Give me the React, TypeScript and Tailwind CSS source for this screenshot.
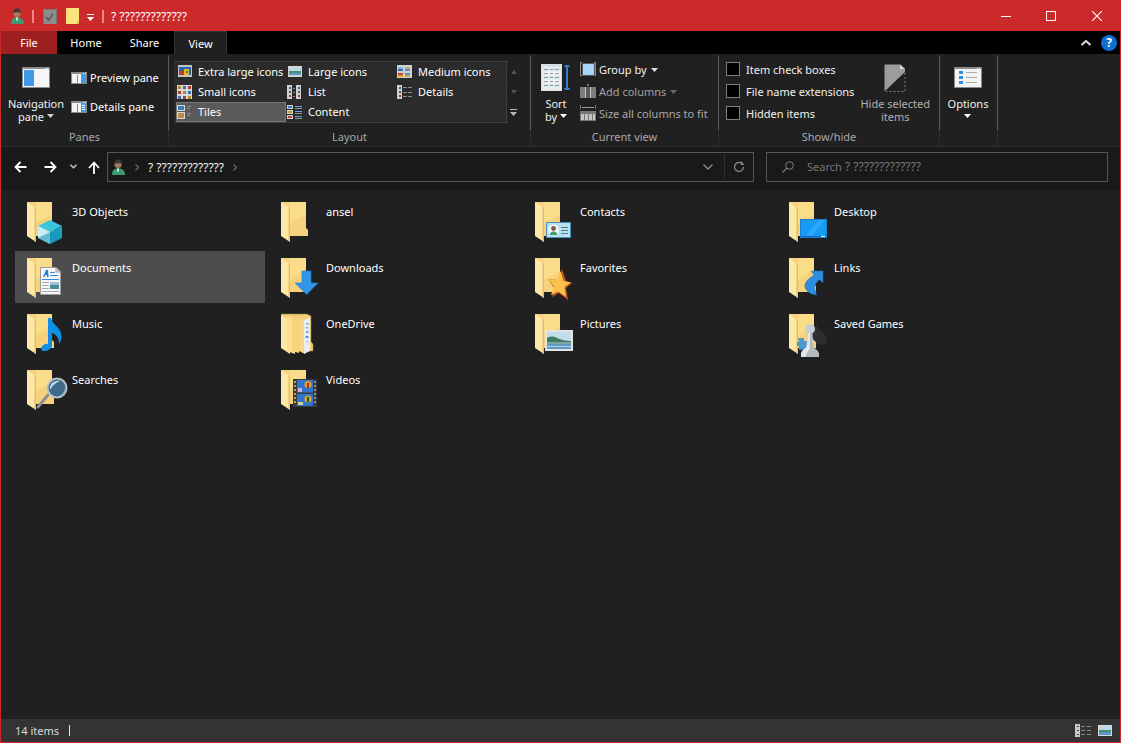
import React from "react";

const Svg = ({ w, h, className = "", children, crisp = false }: { w: number; h: number; className?: string; children: React.ReactNode; crisp?: boolean }) => (
  <svg width={w} height={h} viewBox={`0 0 ${w} ${h}`} className={`block shrink-0 ${className}`} shapeRendering={crisp ? "crispEdges" : undefined}>
    {children}
  </svg>
);

const UserIcon = () => (
  <Svg w={15} h={17}>
    <path d="M1 16 C1 11 3 10 7 9 C11 10 14 11 14 16 Z" fill="#3f9a72" />
    <path d="M6 9.5 L8 9.5 L7.5 13 L6.5 13 Z" fill="#e8f0e8" />
    <circle cx="7" cy="5.5" r="3.6" fill="#a9785a" />
    <path d="M3.2 5 C3 1.5 5.5 0.5 7.5 0.5 C10 0.5 11 3 10.8 5.5 C9.5 3.8 6 3.8 3.2 5 Z" fill="#3a3a38" />
  </Svg>
);

const Folder = () => (
  <g>
    <path d="M4 7 H29 V33 L31 35 V41 H13 Z" fill="#f5d27b" />
    <path d="M13 7 H29 V20 L13 28 Z" fill="#fbdf8d" opacity="0.8" />
    <path d="M4 7 L13 13 V47 L4 41 Z" fill="#fde8a7" />
    <path d="M13 13 V47 L11.5 46 V12 Z" fill="#e6bf62" />
  </g>
);

const Overlays: Record<string, React.ReactNode> = {
  cube: (
    <g>
      <path d="M27 25 L39 31 L27 37 L15 31 Z" fill="#3cc6de" />
      <path d="M15 31 L27 37 V49 L15 43 Z" fill="#c5eff5" />
      <path d="M39 31 L27 37 V49 L39 43 Z" fill="#1b9ec4" />
      <path d="M15 43 L27 37 L39 43 L27 49 Z" fill="#178fb4" opacity="0.55" />
    </g>
  ),
  none: null,
  doc: (
    <g>
      <path d="M17.5 16.5 H33 L37.5 21 V43.5 H17.5 Z" fill="#f6f6f6" stroke="#9c9c9c" />
      <path d="M33 16.5 V21 H37.5 Z" fill="#d8d8d8" stroke="#9c9c9c" />
      <path d="M20 26 L23 19 L25 19 L25.6 26 H24 L23.8 24 H22.4 L21.4 26 Z" fill="#2a80d0" />
      <rect x="27" y="21" width="5" height="1" fill="#3b8cd6" />
      <rect x="27" y="24" width="8" height="1" fill="#3b8cd6" />
      <rect x="19" y="28" width="17" height="1" fill="#3b8cd6" />
      <rect x="19" y="31" width="7" height="1" fill="#aaa" />
      <rect x="19" y="34" width="7" height="1" fill="#aaa" />
      <rect x="19" y="37" width="7" height="1" fill="#aaa" />
      <rect x="19" y="40" width="17" height="1" fill="#aaa" />
      <rect x="27" y="31" width="9" height="7" fill="#4d8a98" />
      <rect x="27" y="31" width="9" height="3" fill="#9fc4d8" />
    </g>
  ),
  download: (
    <g>
      <path d="M25 20 H34 V32 H41 L29.7 43.5 L18 32 H25 Z" fill="#3196ea" stroke="#1f7ac8" strokeWidth="0.6" />
    </g>
  ),
  contact: (
    <g>
      <rect x="15.5" y="27.5" width="24" height="15" fill="#bcdff0" stroke="#4a90bc" />
      <circle cx="22.5" cy="35" r="5.5" fill="#f4f8f8" />
      <path d="M19 40 C19 37 21 36.5 22.5 36.5 C24 36.5 26 37 26 40 Z" fill="#3f9a72" />
      <circle cx="22.5" cy="33.5" r="2.4" fill="#7e5a44" />
      <rect x="30" y="32" width="7" height="1" fill="#4a7ea0" />
      <rect x="30" y="35" width="7" height="1" fill="#4a7ea0" />
      <rect x="30" y="38" width="7" height="1" fill="#4a7ea0" />
    </g>
  ),
  desktop: (
    <g>
      <rect x="15" y="24" width="27" height="19" fill="#1c7fd2" />
      <rect x="16" y="25" width="25" height="17" fill="#169cf5" />
      <path d="M20 42 L34 25 H40 L26 42 Z" fill="#2ba6f8" />
      <rect x="16" y="41" width="25" height="1" fill="#0b68b5" />
      <rect x="36" y="41" width="4" height="1" fill="#e8f4ff" />
    </g>
  ),
  star: (
    <g>
      <path d="M31 18 L35 30 L41 32 L35 37 L37 49 L28 42 L21 46 L23 37 L17 28 L27 29 Z" fill="#c8561c" />
      <path d="M29.5 20 L32.5 30 L40 31.5 L33.5 36 L35 46 L27 40.5 L20 44 L23 35.5 L17 28 L26.5 29 Z" fill="#fac04a" />
    </g>
  ),
  link: (
    <g>
      <path d="M29 20 H38 V32 L34.5 28.5 C31 31 29 35 30 39 C30.5 42 32 44 32 44 C26 44 21 40 20 36 C19.5 31 24 27 29.5 24 L26 20.5 Z" fill="#2f8ee0" stroke="#1e6eb8" strokeWidth="0.6" />
    </g>
  ),
  music: (
    <g>
      <path d="M25 11 H28 C29 16 33 18 36 22 C39.5 27 39 33 36 37 C36.5 32 34 28 29 26 V38 C29 42 24.5 44 21 44 C18 44 17.5 41.5 19 39.5 C20.5 37.5 23 36.5 25 37 Z" fill="#0f8fe6" />
    </g>
  ),
  onedrive: (
    <g>
      <path d="M4 7 H30 L34 9 V35 L36 37 V44 H14 Z" fill="#f1cd74" stroke="#9a8550" strokeWidth="0.5" />
      <path d="M4 8 L13 13 V47 L4 41 Z" fill="#fde7a5" />
      <path d="M10 9 L18 12 V47 L10 44 Z" fill="#fbe093" />
      <path d="M15 10 L22 13 V46 L15 44 Z" fill="#f6d27c" />
      <path d="M22 10 L28 13 V47 L22 44 Z" fill="#f7d784" />
      <path d="M27 13 L33 10 V44 L27 47 Z" fill="#e8eef2" />
      <rect x="29" y="16" width="3" height="1.4" fill="#7db4d8" />
      <rect x="28.5" y="20" width="3" height="1.4" fill="#8dc0de" />
      <rect x="29" y="24" width="2.5" height="2" fill="#6aa8d4" />
      <rect x="28.5" y="29" width="3" height="2" fill="#4f98c8" />
      <rect x="29" y="34" width="2.5" height="1.5" fill="#bfc8cc" />
    </g>
  ),
  picture: (
    <g>
      <rect x="14" y="23" width="28" height="21" fill="#e4e4e4" />
      <rect x="16" y="25" width="24" height="17" fill="#c4dcea" />
      <path d="M16 31 C19 29 23 29 26 31 C30 33 35 34 40 34 V37 H16 Z" fill="#3f7c62" />
      <path d="M16 35 H40 V37 H16 Z" fill="#7fa8a0" />
      <rect x="16" y="37" width="24" height="5" fill="#5f9cc4" />
      <rect x="16" y="39" width="24" height="1" fill="#b6d4e4" />
    </g>
  ),
  game: (
    <g>
      <path d="M13 31 H19 V34 H23 V43 H14 V39 H12 V35 H14 Z" fill="#3893d8" opacity="0.9" />
      <path d="M31 18 C35 24 43 28 42 33 C41 38 36 38 33 37 L24 28 Z" fill="#2e2e2e" />
      <circle cx="25" cy="22" r="5" fill="#c9ced2" />
      <path d="M22.5 26 H27.5 L28.5 40 C30.5 42 34 44 34 47 V50 H16 V47 C16 44 19.5 42 21.5 40 Z" fill="#b4babf" />
      <path d="M23 26 H25 L24.8 42 C23 44 21 46 20.5 50 H16 V47 C16 44 19.5 42 21.5 40 Z" fill="#e4e7ea" />
    </g>
  ),
  search: (
    <g>
      <path d="M15 44 L25 32" stroke="#8f8f8f" strokeWidth="3" strokeLinecap="round" />
      <circle cx="34" cy="25" r="9.5" fill="#3c6a88" stroke="#b7c2c8" strokeWidth="2" />
      <path d="M27 27 C26 21 31 17 37 18 C32 20 29 23 27 27 Z" fill="#c4d8e4" />
      <path d="M36 33 C40 31 42 28 42 24 C44 30 40 34 36 33 Z" fill="#8cb0c4" />
    </g>
  ),
  video: (
    <g>
      <rect x="16" y="16" width="24" height="28" fill="#3a3a3a" />
      <rect x="20" y="17" width="16" height="12.5" fill="#2f74cf" />
      <rect x="20" y="31" width="16" height="12" fill="#2f74cf" />
      <path d="M21 25 H25 V29 H21 Z" fill="#d8a8d0" />
      <circle cx="31" cy="21.5" r="3.6" fill="#e2a020" />
      <path d="M30 20 H32 V25 H30 Z" fill="#b02a1c" />
      <circle cx="31" cy="36" r="3.6" fill="#e2a020" />
      <path d="M30 34 H32 V39 H30 Z" fill="#1c5a30" />
      <rect x="21" y="39" width="5" height="3" fill="#c8d890" />
      {[18, 22, 26, 30, 34, 38].map((y) => (
        <g key={y}>
          <rect x="17" y={y} width="2" height="2" fill="#a8a070" />
          <rect x="37" y={y} width="2" height="2" fill="#8a8a8a" />
        </g>
      ))}
    </g>
  ),
};

const items: [string, string][] = [
  ["3D Objects", "cube"],
  ["ansel", "none"],
  ["Contacts", "contact"],
  ["Desktop", "desktop"],
  ["Documents", "doc"],
  ["Downloads", "download"],
  ["Favorites", "star"],
  ["Links", "link"],
  ["Music", "music"],
  ["OneDrive", "onedrive"],
  ["Pictures", "picture"],
  ["Saved Games", "game"],
  ["Searches", "search"],
  ["Videos", "video"],
];

const Tile = ({ name, kind }: { name: string; kind: string }) => (
  <div className={`flex h-[52px] w-[250px] pl-[8px] ${name === "Documents" ? "bg-[#4d4d4d]" : ""}`}>
    <Svg w={48} h={52}>
      {kind !== "onedrive" && <Folder />}
      {Overlays[kind]}
    </Svg>
    <span className="ml-[1px] mt-[9px] h-[16px] leading-[16px] text-white">{name}</span>
  </div>
);

/* ribbon icons */
const Pane = ({ kind }: { kind: "preview" | "details" }) => (
  <Svg w={16} h={12} crisp>
    <rect x="0" y="0" width="16" height="12" fill="#8a8a8a" />
    <rect x="1" y="2" width="14" height="9" fill="#f4f4f4" />
    <rect x="6" y="3" width="1" height="8" fill="#8a8a8a" />
    <rect x="10" y="2" width="5" height="9" fill="#3f9be8" />
    {kind === "details" && (
      <>
        <rect x="11" y="4" width="3" height="1" fill="#fff" />
        <rect x="11" y="6" width="3" height="1" fill="#fff" />
        <rect x="11" y="8" width="3" height="1" fill="#fff" />
      </>
    )}
    <rect x="12" y="1" width="1" height="1" fill="#eee" />
    <rect x="14" y="1" width="1" height="1" fill="#eee" />
  </Svg>
);

const Caret = ({ color = "#fff" }: { color?: string }) => (
  <svg width="7" height="4" viewBox="0 0 7 4" className="inline-block">
    <path d="M0 0 H7 L3.5 4 Z" fill={color} />
  </svg>
);

const Thumb = ({ x, y, a, b }: { x: number; y: number; a: string; b: string }) => (
  <>
    <rect x={x} y={y} width="5" height="4" fill={a} />
    <rect x={x} y={y + 2} width="5" height="2" fill={b} />
  </>
);

const GalleryIcon = ({ kind }: { kind: string }) => {
  const dash = (x: number, y: number, w: number, c = "#8c8c8c") => <rect key={`${x}-${y}`} x={x} y={y} width={w} height="1" fill={c} />;
  return (
    <Svg w={16} h={14} crisp>
      {kind === "xl" && (
        <>
          <rect x="1" y="0" width="14" height="12" fill="#c4c4c4" />
          <rect x="2" y="2" width="12" height="8" fill="#2a62b8" />
          <rect x="2" y="6" width="5" height="4" fill="#c8342a" />
          <rect x="7" y="4" width="5" height="6" fill="#e2b820" />
          <rect x="9" y="6" width="2" height="2" fill="#3a8a3a" />
        </>
      )}
      {kind === "l" && (
        <>
          <rect x="1" y="1" width="14" height="11" fill="#d4d4d4" />
          <rect x="2" y="3" width="12" height="7" fill="#b8d8e8" />
          <rect x="2" y="6" width="12" height="2" fill="#4a8a70" />
          <rect x="2" y="8" width="12" height="2" fill="#5a98c8" />
        </>
      )}
      {kind === "m" && (
        <>
          <rect x="0" y="0" width="15" height="13" fill="#d0d0d0" />
          <Thumb x={1} y={2} a="#8cb4dc" b="#3a6ab0" />
          <Thumb x={8} y={2} a="#c0b070" b="#5a8ac0" />
          <Thumb x={1} y={8} a="#d04030" b="#e0a030" />
          <Thumb x={8} y={8} a="#5090c0" b="#d0b030" />
        </>
      )}
      {kind === "s" && (
        <>
          <rect x="0" y="0" width="15" height="14" fill="#d8d8d8" />
          {[1, 6, 11].flatMap((x) =>
            [1, 6, 11].map((y, i) => <rect key={`${x}-${y}`} x={x} y={y} width="3" height="3" fill={["#3a70b0", "#b08a30", "#b03a30"][(x + i) % 3]} />)
          )}
        </>
      )}
      {kind === "list" && (
        <>
          {[0, 9].map((x) => (
            <g key={x}>
              <rect x={x} y="0" width="5" height="14" fill="#cfcfcf" />
              <rect x={x + 2} y="2" width="2" height="2" fill="#3a70b0" />
              <rect x={x + 2} y="6" width="2" height="2" fill="#555" />
              <rect x={x + 2} y="10" width="2" height="2" fill="#b03a30" />
            </g>
          ))}
          {[3, 7, 11].map((y) => dash(6, y, 2))}
        </>
      )}
      {kind === "details" && (
        <>
          <rect x="0" y="0" width="5" height="14" fill="#cfcfcf" />
          <rect x="2" y="2" width="2" height="2" fill="#3a70b0" />
          <rect x="2" y="6" width="2" height="2" fill="#555" />
          <rect x="2" y="10" width="2" height="2" fill="#b03a30" />
          {[2, 7, 11].map((y) => (
            <g key={y}>
              {dash(6, y, 4)}
              {dash(11, y, 4)}
            </g>
          ))}
        </>
      )}
      {kind === "tiles" && (
        <>
          <rect x="0" y="0" width="8" height="6" fill="#d8d8d8" />
          <rect x="1" y="1" width="6" height="4" fill="#3a78c0" />
          <rect x="0" y="7" width="8" height="7" fill="#d8d8d8" />
          <rect x="1" y="8" width="6" height="5" fill="#c08a40" />
          {dash(10, 1, 4)}
          {dash(10, 3, 3)}
          {dash(10, 8, 4)}
          {dash(10, 10, 3)}
        </>
      )}
      {kind === "content" && (
        <>
          <rect x="0" y="0" width="6" height="4" fill="#d0d0d0" />
          <rect x="1" y="1" width="4" height="2" fill="#3a78c0" />
          <rect x="0" y="5" width="6" height="4" fill="#d0d0d0" />
          <rect x="1" y="6" width="4" height="2" fill="#c0a030" />
          <rect x="0" y="10" width="6" height="4" fill="#d0d0d0" />
          <rect x="1" y="11" width="4" height="2" fill="#c04030" />
          {[1, 6, 11].map((y) => dash(8, y, 7, "#6aa4e8"))}
          {[3, 8, 13].map((y) => dash(8, y, 7, "#9a9a9a"))}
        </>
      )}
    </Svg>
  );
};

const GCell = ({ icon, label, active = false, w }: { icon: string; label: string; active?: boolean; w: string }) => (
  <div className={`flex h-[20px] items-center ${w} ${active ? "border border-[#787878] bg-[#5a5a5a]" : ""}`}>
    <GalleryIcon kind={icon} />
    <span className="mb-[2px] ml-[5px] whitespace-nowrap text-white">{label}</span>
  </div>
);

const Group = ({ w, label, children }: { w: string; label: string; children: React.ReactNode }) => (
  <div className={`flex h-full shrink-0 flex-col border-r border-[#2d2d2d] pt-[2px] ${w}`}>
    <div className="-mr-[1px] h-[74px] border-r border-[#5c5c5c]">{children}</div>
    <div className="h-[14px] text-center leading-[14px] text-[#a8a8a8]">{label}</div>
  </div>
);

const Check = ({ label }: { label: string }) => (
  <div className="flex h-[22px] items-center">
    <span className="h-[14px] w-[14px] border border-[#808080] bg-black" />
    <span className="ml-[6px] whitespace-nowrap text-[#f0f0f0]">{label}</span>
  </div>
);

export default function App() {
  return (
    <div className="flex h-[743px] w-[1121px] flex-col overflow-hidden border border-[#c92a2a] bg-[#202020] font-['Noto_Sans',sans-serif] text-[11px] leading-[13px] text-white">
      {/* title bar */}
      <div className="flex h-[30px] shrink-0 items-center bg-[#cc2a2a]">
        <div className="ml-[9px]"><UserIcon /></div>
        <span className="ml-[7px] h-[13px] w-[2px] bg-[#e88a8a]" />
        <Svg w={14} h={15} className="ml-[9px]" crisp>
          <rect x="0" y="0" width="13" height="15" fill="#8c8c8c" stroke="#777" />
          <path d="M3 8 L5.5 11 L10 5" stroke="#555" strokeWidth="1.4" fill="none" shapeRendering="auto" />
        </Svg>
        <Svg w={13} h={16} className="ml-[9px]" crisp>
          <rect x="0" y="0" width="13" height="16" fill="#fde27e" />
          <rect x="11" y="13" width="2" height="3" fill="#e8b83c" />
        </Svg>
        <Svg w={8} h={8} className="ml-[8px] mt-[3px]" crisp>
          <rect x="0" y="0" width="7" height="1" fill="#fff" />
          <path d="M0 3 H7 L3.5 7 Z" fill="#fff" shapeRendering="auto" />
        </Svg>
        <span className="ml-[7px] h-[13px] w-[2px] bg-[#e88a8a]" />
        <span className="ml-[7px] text-[12px] text-white">? ?????????????</span>
        <div className="ml-auto mr-[18px] flex items-center">
          <Svg w={10} h={10} crisp><rect x="0" y="5" width="10" height="1" fill="#fff" /></Svg>
          <Svg w={10} h={10} className="ml-[35px]" crisp><rect x="0.5" y="0.5" width="9" height="9" fill="none" stroke="#fff" /></Svg>
          <Svg w={10} h={10} className="ml-[36px]"><path d="M0 0 L10 10 M10 0 L0 10" stroke="#fff" strokeWidth="1.1" /></Svg>
        </div>
      </div>

      {/* tabs */}
      <div className="flex h-[23px] shrink-0 items-center bg-black">
        <div className="flex h-full w-[56px] items-center justify-center bg-[#9e1f1f]">File</div>
        <div className="flex h-full w-[58px] items-center justify-center">Home</div>
        <div className="flex h-full w-[59px] items-center justify-center">Share</div>
        <div className="flex h-full w-[53px] items-center justify-center border-x border-t border-[#333] bg-[#202020]">View</div>
        <div className="ml-auto mr-[3px] flex items-center gap-[10px]">
          <Svg w={10} h={6}><path d="M0.5 5 L5 1 L9.5 5" stroke="#d8d8d8" strokeWidth="2" fill="none" /></Svg>
          <div className="flex h-[16px] w-[16px] items-center justify-center rounded-full bg-[#0f6fd0] text-[12px] font-bold leading-none">?</div>
        </div>
      </div>

      {/* ribbon */}
      <div className="flex h-[93px] shrink-0 border-b border-[#2d2d2d] bg-[#202020]">
        <Group w="w-[168px]" label="Panes">
          <div className="flex">
            <div className="flex w-[70px] flex-col items-center pt-[11px]">
              <Svg w={28} h={21} crisp>
                <rect x="0" y="0" width="28" height="21" fill="#8a8a8a" />
                <rect x="1" y="2" width="26" height="18" fill="#f6f6f6" />
                <rect x="2" y="3" width="10" height="16" fill="#3f9be8" />
                <rect x="23" y="1" width="1" height="1" fill="#eee" />
                <rect x="25" y="1" width="1" height="1" fill="#eee" />
              </Svg>
              <div className="mt-[9px] text-center text-[#f0f0f0]">Navigation<br />pane <span className="relative top-[-2px]"><Caret color="#d0d0d0" /></span></div>
            </div>
            <div className="pt-[7px]">
              <div className="flex h-[29px] items-center"><Pane kind="preview" /><span className="ml-[3px]">Preview pane</span></div>
              <div className="flex h-[29px] items-center"><Pane kind="details" /><span className="ml-[3px]">Details pane</span></div>
            </div>
          </div>
        </Group>

        <Group w="w-[362px]" label="Layout">
          <div className="flex pl-[5px] pt-[5px]">
            <div className="h-[62px] w-[333px] border-y border-r border-[#3e3e3e] bg-[#2b2b2b] pl-[2px]">
              <div className="flex">
                <GCell icon="xl" label="Extra large icons" w="w-[110px] pl-[1px]" />
                <GCell icon="l" label="Large icons" w="w-[109px] pl-[1px]" />
                <GCell icon="m" label="Medium icons" w="w-[110px] pl-[2px]" />
              </div>
              <div className="flex">
                <GCell icon="s" label="Small icons" w="w-[110px] pl-[1px]" />
                <GCell icon="list" label="List" w="w-[109px] pl-[1px]" />
                <GCell icon="details" label="Details" w="w-[110px] pl-[2px]" />
              </div>
              <div className="flex">
                <GCell icon="tiles" label="Tiles" active w="w-[110px]" />
                <GCell icon="content" label="Content" w="w-[109px] pl-[1px]" />
              </div>
            </div>
            <div className="flex w-[13px] flex-col pt-[1px]">
              <div className="flex h-[20px] items-center justify-center"><Svg w={6} h={4}><path d="M0 4 L3 0 L6 4 Z" fill="#555" /></Svg></div>
              <div className="flex h-[20px] items-center justify-center"><Svg w={6} h={4}><path d="M0 0 L3 4 L6 0 Z" fill="#555" /></Svg></div>
              <div className="flex h-[20px] items-center justify-center">
                <Svg w={7} h={7} crisp><rect x="0" y="0" width="7" height="1" fill="#b8b8b8" /><path d="M0 3 H7 L3.5 7 Z" fill="#b8b8b8" shapeRendering="auto" /></Svg>
              </div>
            </div>
          </div>
        </Group>

        <Group w="w-[188px]" label="Current view">
          <div className="flex">
            <div className="flex w-[49px] flex-col items-center pl-[1px] pt-[8px]">
              <Svg w={30} h={27} crisp>
                <rect x="0" y="0" width="21" height="27" fill="#dcdcdc" />
                <rect x="1" y="1" width="19" height="25" fill="#e6eef2" />
                <rect x="1" y="1" width="19" height="2" fill="#cfe2ec" />
                {[5, 9, 13, 17, 21].map((y) => (
                  <g key={y}>
                    <rect x="2" y={y - 1} width="17" height="3" fill={y % 8 === 5 ? "#d5e6ef" : "#eef3f5"} />
                    <rect x="3" y={y} width="4" height="1" fill="#999" />
                    <rect x="9" y={y} width="3" height="1" fill="#999" />
                    <rect x="14" y={y} width="4" height="1" fill="#999" />
                  </g>
                ))}
                <rect x="25" y="2" width="2" height="23" fill="#2e82cc" />
                <rect x="23" y="2" width="6" height="1" fill="#2e82cc" />
                <rect x="24" y="1" width="4" height="1" fill="#2e82cc" />
                <rect x="23" y="24" width="6" height="1" fill="#2e82cc" />
                <rect x="24" y="25" width="4" height="1" fill="#2e82cc" />
              </Svg>
              <div className="mt-[6px] text-center text-[#f0f0f0]">Sort<br />by <span className="relative top-[-2px]"><Caret /></span></div>
            </div>
            <div className="pt-[2px]">
              <div className="flex h-[22px] items-center text-[#f0f0f0]">
                <Svg w={16} h={14} crisp>
                  <rect x="0.5" y="0.5" width="15" height="13" fill="none" stroke="#8a8a8a" />
                  <rect x="2" y="0" width="12" height="14" fill="#202020" />
                  <rect x="2" y="1" width="12" height="12" fill="#9ecbf0" stroke="#5a5a5a" />
                  <rect x="3" y="2" width="10" height="10" fill="#a8d4f6" />
                </Svg>
                <span className="ml-[3px]">Group by</span>
                <span className="mb-[2px] ml-[4px]"><Caret color="#e0e0e0" /></span>
              </div>
              <div className="flex h-[22px] items-center text-[#a0a0a0]">
                <Svg w={16} h={14} crisp>
                  <rect x="0" y="3" width="16" height="11" fill="#7e7e7e" />
                  <rect x="6" y="3" width="4" height="11" fill="#5a5a5a" />
                  <rect x="5" y="3" width="1" height="11" fill="#c0c0c0" />
                  <rect x="10" y="3" width="1" height="11" fill="#c0c0c0" />
                  <rect x="7" y="0" width="2" height="2" fill="#777" />
                </Svg>
                <span className="ml-[3px]">Add columns</span>
                <span className="mb-[2px] ml-[4px]"><Caret color="#6c6c6c" /></span>
              </div>
              <div className="flex h-[22px] items-center text-[#a8a8a8]">
                <Svg w={16} h={16} crisp>
                  <rect x="0" y="0" width="1" height="4" fill="#777" />
                  <rect x="15" y="0" width="1" height="4" fill="#777" />
                  <rect x="2" y="2" width="12" height="1" fill="#999" />
                  <rect x="0" y="6" width="16" height="10" fill="#777" />
                  <rect x="1" y="9" width="3" height="6" fill="#c4c4c4" />
                  <rect x="5" y="9" width="3" height="6" fill="#c4c4c4" />
                  <rect x="9" y="9" width="3" height="6" fill="#c4c4c4" />
                  <rect x="13" y="9" width="2" height="6" fill="#c4c4c4" />
                </Svg>
                <span className="ml-[3px] whitespace-nowrap">Size all columns to fit</span>
              </div>
            </div>
          </div>
        </Group>

        <Group w="w-[221px]" label="Show/hide">
          <div className="flex">
            <div className="pl-[7px] pt-[2px]">
              <Check label="Item check boxes" />
              <Check label="File name extensions" />
              <Check label="Hidden items" />
            </div>
            <div className="flex flex-1 flex-col items-center pr-[3px] pt-[8px]">
              <Svg w={22} h={28}>
                <path d="M0.5 0.5 H16 L21 5 V8 L0.5 27.5 Z" fill="#9c9c9c" />
                <path d="M16 0.5 L21 5 H16 Z" fill="#d8d8d8" />
                <path d="M21 9 V27.5 H2" fill="none" stroke="#7c7c7c" strokeDasharray="2 2" />
              </Svg>
              <div className="mt-[5px] whitespace-nowrap text-center text-[#b0b0b0]">Hide selected<br />items</div>
            </div>
          </div>
        </Group>

        <Group w="w-[58px]" label="">
          <div className="flex flex-col items-center pr-[1px] pt-[11px]">
            <Svg w={28} h={21} crisp>
              <rect x="0" y="0" width="28" height="21" fill="#8a8a8a" />
              <rect x="1" y="2" width="26" height="18" fill="#f4f4f4" />
              {[5, 10, 15].map((y) => (
                <g key={y}>
                  <rect x="5" y={y - 1} width="4" height="3" fill="#2f8ae0" />
                  <rect x="12" y={y} width="11" height="1" fill="#aaa" />
                </g>
              ))}
              <rect x="23" y="1" width="1" height="1" fill="#eee" />
              <rect x="25" y="1" width="1" height="1" fill="#eee" />
            </Svg>
            <div className="mt-[9px] text-center text-[#f0f0f0]">Options<br /><span className="relative top-[-2px]"><Caret /></span></div>
          </div>
        </Group>
      </div>

      {/* nav */}
      <div className="flex h-[43px] shrink-0 items-start bg-[#191919]">
        <div className="flex h-[40px] w-[106px] shrink-0 items-center pl-[13px]">
          <Svg w={13} h={12}><path d="M12.5 6 H2 M6.5 1 L1.5 6 L6.5 11" stroke="#fff" strokeWidth="1.8" fill="none" /></Svg>
          <Svg w={13} h={12} className="ml-[17px]"><path d="M0.5 6 H11 M6.5 1 L11.5 6 L6.5 11" stroke="#fff" strokeWidth="1.8" fill="none" /></Svg>
          <Svg w={7} h={5} className="mb-[2px] ml-[13px]"><path d="M0.5 0.8 L3.5 3.8 L6.5 0.8" stroke="#c8c8c8" strokeWidth="1.5" fill="none" /></Svg>
          <Svg w={12} h={13} className="ml-[11px]"><path d="M6 13 V2 M1 7 L6 1.5 L11 7" stroke="#fff" strokeWidth="1.8" fill="none" /></Svg>
        </div>
        <div className="mt-[5px] flex h-[30px] w-[647px] shrink-0 items-center border border-[#555] pl-[3px]">
          <UserIcon />
          <Svg w={4} h={7} className="ml-[9px]"><path d="M0.5 0.5 L3.5 3.5 L0.5 6.5" stroke="#666" strokeWidth="1.3" fill="none" /></Svg>
          <span className="ml-[9px] text-[12px] text-[#f0f0f0]">? ?????????????</span>
          <Svg w={4} h={7} className="ml-[9px]"><path d="M0.5 0.5 L3.5 3.5 L0.5 6.5" stroke="#666" strokeWidth="1.3" fill="none" /></Svg>
          <Svg w={10} h={6} className="ml-auto"><path d="M0.5 0.5 L5 5 L9.5 0.5" stroke="#8a8a8a" strokeWidth="1.4" fill="none" /></Svg>
          <span className="ml-[11px] h-[26px] w-[1px] bg-[#2e2e2e]" />
          <Svg w={12} h={12} className="mx-[8px]">
            <path d="M10.5 6 A4.5 4.5 0 1 1 8.5 2.2" stroke="#8a8a8a" strokeWidth="1.3" fill="none" />
            <path d="M8 0 V4 H11.5 Z" fill="#8a8a8a" />
          </Svg>
        </div>
        <div className="ml-[12px] mt-[5px] flex h-[30px] w-[342px] shrink-0 items-center border border-[#555] pl-[15px] text-[#777]">
          <Svg w={12} h={12}>
            <circle cx="7.5" cy="4.5" r="3.8" fill="none" stroke="#808080" />
            <path d="M4.8 7.2 L0.5 11.5" stroke="#808080" strokeWidth="1.2" />
          </Svg>
          <span className="mb-[2px] ml-[13px] text-[12px]"><span className="text-[11px]">Search</span> ? ?????????????</span>
        </div>
      </div>

      {/* items */}
      <div className="grid flex-1 auto-rows-[52px] grid-cols-[repeat(4,250px)] content-start gap-[4px] pl-[14px] pt-[5px]">
        {items.map(([n, k]) => (
          <Tile key={n} name={n} kind={k} />
        ))}
      </div>

      {/* status */}
      <div className="flex h-[23px] shrink-0 items-center bg-[#333] text-[#dcdcdc]">
        <span className="ml-[14px]">14 items</span>
        <span className="ml-[10px] h-[11px] w-[1px] bg-[#e8e8e8]" />
        <Svg w={16} h={13} className="ml-auto" crisp>
          <rect x="0" y="0" width="5" height="13" fill="#c8c8c8" />
          <rect x="2" y="2" width="2" height="1" fill="#444" />
          <rect x="2" y="6" width="2" height="1" fill="#444" />
          <rect x="2" y="10" width="2" height="1" fill="#a03030" />
          {[2, 6, 10].map((y) => (
            <g key={y}>
              <rect x="6" y={y} width="4" height="1" fill="#888" />
              <rect x="12" y={y} width="4" height="1" fill="#888" />
            </g>
          ))}
        </Svg>
        <Svg w={14} h={11} className="ml-[7px] mr-[8px]" crisp>
          <rect x="0" y="0" width="14" height="11" fill="#d8d8d8" />
          <rect x="1" y="1" width="12" height="9" fill="#c0d8e8" />
          <rect x="1" y="5" width="12" height="2" fill="#4a8a70" />
          <rect x="1" y="7" width="12" height="3" fill="#5a98c8" />
        </Svg>
      </div>
    </div>
  );
}
